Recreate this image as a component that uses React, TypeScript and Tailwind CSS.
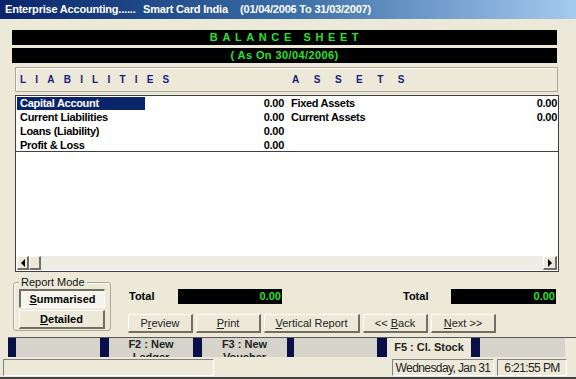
const liabilities = [
  ["Capital Account", "0.00"],
  ["Current Liabilities", "0.00"],
  ["Loans (Liability)", "0.00"],
  ["Profit & Loss", "0.00"],
];

const assets = [
  ["Fixed Assets", "0.00"],
  ["Current Assets", "0.00"],
];

const fkeys = [
  { navy: "w-[8px]", seg: "w-[84px]", l1: "", l2: "" },
  { navy: "w-[9px]", seg: "w-[84px]", l1: "F2 : New", l2: "Ledger" },
  { navy: "w-[9px]", seg: "w-[85px]", l1: "F3 : New", l2: "Voucher" },
  { navy: "w-[7px]", seg: "w-[83px]", l1: "", l2: "" },
  { navy: "w-[10px]", seg: "w-[84px]", l1: "F5 : Cl. Stock", l2: "", light: true },
  { navy: "w-[9px]", seg: "w-[85px]", l1: "", l2: "" },
];

function WinButton({
  children,
  className = "",
  pressed = false,
}: {
  children: React.ReactNode;
  className?: string;
  pressed?: boolean;
}) {
  return (
    <div
      className={`flex items-center justify-center ${
        pressed
          ? "border-t-2 border-l-2 border-r border-b border-t-[#716f64] border-l-[#716f64] border-r-white border-b-white bg-[#f5f4ef]"
          : "border-t border-l border-r-2 border-b-2 border-t-white border-l-white border-r-[#716f64] border-b-[#716f64] bg-[#ece9d8]"
      } ${className}`}
    >
      {children}
    </div>
  );
}

export default function App() {
  return (
    <div className="w-[576px] h-[379px] overflow-hidden bg-[#ece9d8] font-['Liberation_Sans',Arial,sans-serif] text-[11px] text-black flex flex-col">
      {/* title bar */}
      <div className="h-[19px] shrink-0 flex items-center bg-gradient-to-r from-[#0a246a] via-[#3a6ea5] to-[#a6caf0] text-white font-bold text-[11px] tracking-[-0.2px]">
        <span className="w-[143px] pl-[5px]">Enterprise Accounting......</span>
        <span className="w-[97px]">Smart Card India</span>
        <span>(01/04/2006 To 31/03/2007)</span>
      </div>

      <div className="flex-1 flex flex-col">
        {/* black heading bars */}
        <div className="ml-[12px] mt-[11px] w-[545px] h-[15px] bg-black flex items-center justify-center text-[#2ee02e] font-bold tracking-[4.6px] pl-[4px]">
          BALANCE SHEET
        </div>
        <div className="ml-[12px] mt-[3px] w-[545px] h-[15px] bg-black flex items-center justify-center text-[#2ee02e] font-bold tracking-[0.4px]">
          ( As On 30/04/2006)
        </div>

        {/* column header */}
        <div className="ml-[15px] mt-[4px] w-[543px] h-[25px] border border-[#aca899] shadow-[inset_1px_1px_0_#fff] flex items-end pb-[4px] text-[#1a1a80] font-bold text-[10px]">
          <span className="pl-[4px] w-[276px] tracking-[9.2px]">LIABILITIES</span>
          <span className="tracking-[14.5px]">ASSETS</span>
        </div>

        {/* list box */}
        <div className="ml-[15px] mt-[3px] w-[544px] h-[177px] bg-white border border-[#404040] flex flex-col">
          <div className="border-b border-[#404040] h-[56px]">
            {liabilities.map(([name, val], i) => {
              const a = assets[i];
              return (
                <div key={name} className="h-[14px] flex items-center font-bold tracking-[-0.3px]">
                  <div
                    className={`ml-[1px] w-[128px] h-[13px] pl-[3px] flex items-center ${
                      i === 0 ? "bg-[#0a246a] text-white" : ""
                    }`}
                  >
                    {name}
                  </div>
                  <div className="w-[139px] text-right">{val}</div>
                  <div className="ml-[7px] flex-1">{a ? a[0] : ""}</div>
                  <div className="w-[60px] text-right pr-[1px]">{a ? a[1] : ""}</div>
                </div>
              );
            })}
          </div>
          <div className="flex-1" />
          {/* horizontal scrollbar */}
          <div className="h-[14px] mx-[1px] mb-[1px] bg-[#eeede5] flex">
            <WinButton className="w-[12px] h-[14px]">
              <span className="w-0 h-0 border-y-[4px] border-y-transparent border-r-[4px] border-r-black" />
            </WinButton>
            <WinButton className="w-[12px] h-[14px]">{null}</WinButton>
            <div className="flex-1" />
            <WinButton className="w-[14px] h-[14px]">
              <span className="w-0 h-0 border-y-[4px] border-y-transparent border-l-[4px] border-l-black" />
            </WinButton>
          </div>
        </div>

        {/* bottom controls */}
        <div className="h-[65px] flex">
          <div className="relative ml-[13px] mt-[10px] w-[98px] h-[49px] border border-[#aca899] rounded-[3px] shadow-[inset_1px_1px_0_#fff]">
            <span className="absolute -top-[8px] left-[5px] px-[2px] bg-[#ece9d8] text-[#111] text-[11px] leading-[14px]">
              Report Mode
            </span>
            <WinButton pressed className="absolute left-[5px] top-[6px] w-[86px] h-[19px] font-bold text-[11px]">
              <span>
                <span className="underline">S</span>ummarised
              </span>
            </WinButton>
            <WinButton className="absolute left-[5px] top-[27px] w-[86px] h-[19px] font-bold text-[11px]">
              <span>
                <span className="underline">D</span>etailed
              </span>
            </WinButton>
          </div>

          <div className="ml-[17px] mt-[17px] flex flex-col">
            <div className="flex items-center h-[15px]">
              <span className="w-[50px] pl-[1px] font-bold">Total</span>
              <div className="w-[104px] h-[15px] bg-black text-[#2ee02e] font-bold text-right pr-[1px] leading-[15px]">
                0.00
              </div>
              <span className="ml-[121px] w-[48px] font-bold">Total</span>
              <div className="w-[105px] h-[15px] bg-black text-[#2ee02e] font-bold text-right pr-[1px] leading-[15px]">
                0.00
              </div>
            </div>
            <div className="mt-[10px] flex gap-[3px] text-[#222]">
              <WinButton className="w-[65px] h-[19px]">
                <span>
                  P<span className="underline">r</span>eview
                </span>
              </WinButton>
              <WinButton className="w-[65px] h-[19px]">
                <span>
                  <span className="underline">P</span>rint
                </span>
              </WinButton>
              <WinButton className="w-[96px] h-[19px]">
                <span>
                  <span className="underline">V</span>ertical Report
                </span>
              </WinButton>
              <WinButton className="w-[65px] h-[19px]">
                <span>
                  &lt;&lt; <span className="underline">B</span>ack
                </span>
              </WinButton>
              <WinButton className="w-[65px] h-[19px]">
                <span>
                  <span className="underline">N</span>ext &gt;&gt;
                </span>
              </WinButton>
            </div>
          </div>
        </div>

        {/* function key bar */}
        <div className="ml-[8px] h-[20px] flex border-t border-[#5a5a5a]">
          {fkeys.map((k, i) => (
            <div key={i} className="flex">
              <div className={`${k.navy} h-full bg-[#0a0f4a]`} />
              <div
                className={`${k.seg} h-full overflow-hidden flex flex-col items-center font-bold text-[#222] ${
                  k.light ? "bg-[#ece9d8] justify-center" : "bg-[#d6d3ca]"
                } leading-[13px]`}
              >
                <span>{k.l1}</span>
                {k.l2 && <span>{k.l2}</span>}
              </div>
            </div>
          ))}
        </div>

        {/* status bar */}
        <div className="mt-[2px] h-[17px] flex text-[12px] text-[#222] tracking-[-0.6px]">
          <div className="ml-[3px] w-[211px] h-full border-t border-l border-[#808080] border-b border-r border-b-white border-r-white bg-[#ece9d8]" />
          <div className="ml-[178px] w-[102px] h-full border-t border-l border-[#808080] border-b border-r border-b-white border-r-white flex items-center justify-center">
            Wednesday, Jan 31
          </div>
          <div className="ml-[3px] w-[70px] h-full border-t border-l border-[#808080] border-b border-r border-b-white border-r-white flex items-center justify-center">
            6:21:55 PM
          </div>
        </div>
        <div className="flex-1" />
      </div>
      <div className="h-[2px] bg-[#404040]" />
    </div>
  );
}
